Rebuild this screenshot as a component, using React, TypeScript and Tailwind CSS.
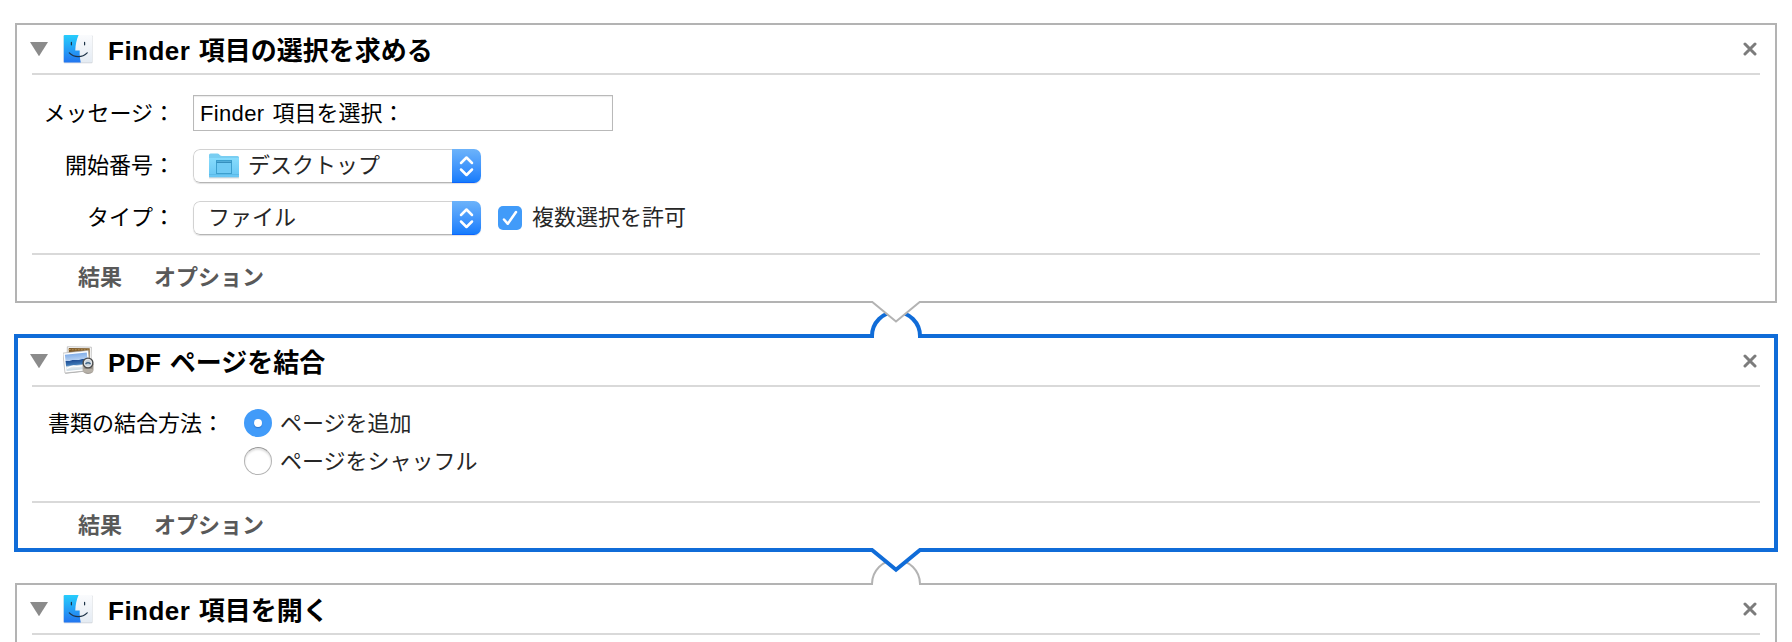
import type { ReactNode } from 'react';

const FinderIcon = () => (
  <svg width="30" height="30" viewBox="0 0 30 30" className="block">
    <defs>
      <linearGradient id="finderBlue" x1="0" y1="0" x2="0" y2="1">
        <stop offset="0" stopColor="#27cdfc" />
        <stop offset="1" stopColor="#2275f0" />
      </linearGradient>
      <linearGradient id="finderWhite" x1="0" y1="0" x2="0" y2="1">
        <stop offset="0" stopColor="#fafbfd" />
        <stop offset="1" stopColor="#e4ebf3" />
      </linearGradient>
    </defs>
    <rect x="0.5" y="1.300" width="29" height="28" rx="1" fill="#b9bec4" opacity="0.7" />
    <rect x="0.8" y="1" width="28.4" height="27.600" rx="1" fill="url(#finderWhite)" />
    <path d="M1.6 1H15.6C13.6 5.500 12.500 10.500 12.300 16.500H16.700C16.500 20.500 16.900 24.500 17.800 28.600H1.600Q0.800 28.600 0.800 27.800V1.800Q0.800 1 1.600 1Z" fill="url(#finderBlue)" />
    <path d="M8.400 8.400V10.800M21.600 8.400V10.800" stroke="#1d3347" strokeWidth="1.200" strokeLinecap="round" />
    <path d="M6.300 18.800C11.300 23.800 19.300 23.800 24.200 18.800" fill="none" stroke="#1d3347" strokeWidth="1.200" strokeLinecap="round" />
  </svg>
);

const PreviewIcon = () => (
  <svg width="32" height="30" viewBox="0 0 32 30" className="block">
    <defs>
      <linearGradient id="sky" x1="0" y1="0" x2="0" y2="1">
        <stop offset="0" stopColor="#82aee8" />
        <stop offset="0.38" stopColor="#b4d0f2" />
        <stop offset="0.4" stopColor="#1f4f96" />
        <stop offset="0.66" stopColor="#3d77b5" />
        <stop offset="0.76" stopColor="#e9eff1" />
        <stop offset="1" stopColor="#c9d8e2" />
      </linearGradient>
      <linearGradient id="loupe" x1="0" y1="0" x2="1" y2="0">
        <stop offset="0" stopColor="#bdb8b0" />
        <stop offset="0.4" stopColor="#77716a" />
        <stop offset="1" stopColor="#a29c94" />
      </linearGradient>
    </defs>
    <g transform="rotate(1 18 10)">
      <rect x="4.200" y="1" width="24" height="19" fill="#fff" stroke="#b5b5b5" strokeWidth="0.800" />
      <rect x="5.600" y="2.200" width="21" height="16" fill="#7d5a28" />
      <path d="M5.600 3.800H26.600" stroke="#b8935a" strokeDasharray="2 1" />
    </g>
    <g transform="rotate(-6 13 17)">
      <rect x="1.300" y="6.300" width="25.500" height="20.200" fill="#777" opacity="0.6" />
      <rect x="1" y="5.800" width="25.500" height="20" fill="#fff" stroke="#aaa" strokeWidth="0.600" />
      <rect x="2.800" y="7.600" width="22" height="16.400" fill="url(#sky)" />
      <path d="M3.500 21.500Q9 18.500 12 20T22 19.500" fill="none" stroke="#fff" strokeWidth="1.200" />
    </g>
    <path d="M19.500 18V23.800Q20 27.600 25 27.800T30.500 24V18Z" fill="url(#loupe)" />
    <ellipse cx="25" cy="24.800" rx="5.200" ry="2.200" fill="#b6b0a7" />
    <circle cx="25" cy="17" r="4.900" fill="#c9d3db" stroke="#4c4c4c" strokeWidth="1.400" />
    <circle cx="25" cy="17" r="3.600" fill="none" stroke="#eee" strokeWidth="0.800" />
    <path d="M22.500 18Q25 15.500 27.600 18" stroke="#426789" strokeWidth="1.300" fill="none" />
  </svg>
);

const FolderIcon = () => (
  <svg width="32" height="28" viewBox="0 0 32 28" className="block">
    <defs>
      <linearGradient id="folder" x1="0" y1="0" x2="0" y2="1">
        <stop offset="0" stopColor="#87dcfd" />
        <stop offset="1" stopColor="#66c5f3" />
      </linearGradient>
    </defs>
    <path d="M1 25.800H31" stroke="#9aa7ae" strokeWidth="1" opacity="0.6" />
    <path d="M1 3Q1 1.500 2.500 1.500H9.500Q10.500 1.500 11.300 2.500L12 3.300Q12.800 4 14 4H29.500Q31 4 31 5.500V25H1Z" fill="#79cef2" />
    <path d="M1 6H31V24.500Q31 25.300 30.200 25.300H1.800Q1 25.300 1 24.500Z" fill="url(#folder)" />
    <path d="M1 22.500H31" stroke="#58b5e2" strokeWidth="0.700" />
    <rect x="8.500" y="8.500" width="15" height="13" fill="#70cbf5" stroke="#3c9fce" strokeWidth="1" />
    <path d="M8.500 10.300H23.500" stroke="#358fbe" strokeWidth="1.400" />
  </svg>
);

type HeaderProps = { icon: ReactNode; latin: string; title: string; height: string };

function Header({ icon, latin, title, height }: HeaderProps) {
  return (
    <div className={`flex items-center border-b-2 border-[#d9d9d9] ${height}`}>
      <svg width="18" height="14" viewBox="0 0 18 14" className="-ml-0.5 shrink-0">
        <path d="M0 0H18L9 14.300Z" fill="#8b8b8b" />
      </svg>
      <div className="ml-[15px] w-8 shrink-0">{icon}</div>
      <h2 className="mt-1 ml-[13px] text-[26px] leading-8 font-bold whitespace-pre text-black">
        <span className="tracking-[0.5px]">{latin}</span>
        <span className="ml-px">{` ${title}`}</span>
      </h2>
      <svg width="14" height="14" viewBox="0 0 14 14" className="mr-[3px] ml-auto shrink-0">
        <path d="M2 2L12 12M12 2L2 12" stroke="#7c7c7c" strokeWidth="3" strokeLinecap="round" />
      </svg>
    </div>
  );
}

function Footer({ height }: { height: string }) {
  return (
    <div className={`flex items-center gap-8 border-t-2 border-[#d9d9d9] pl-[46px] font-bold text-[#595959] ${height}`}>
      <span>結果</span>
      <span>オプション</span>
    </div>
  );
}

function Popup({ children }: { children: ReactNode }) {
  return (
    <div className="flex h-[34px] w-[288px] overflow-hidden rounded-[7px] shadow-[0_1px_1px_rgba(0,0,0,0.12)]">
      <div className="flex flex-1 items-center rounded-l-[7px] border border-r-0 border-[#d2d2d2] border-b-[#b5b5b5] pl-[14px] text-[#262626]">
        {children}
      </div>
      <div className="flex w-[29px] items-center justify-center border-b border-[#0d64fb] bg-linear-to-b from-[#6cb3fa] to-[#157cfc]">
        <svg width="15" height="22" viewBox="0 0 15 22" fill="none" stroke="#fff" strokeWidth="2.500" strokeLinecap="round" strokeLinejoin="round">
          <path d="M2 8L7.500 2.500L13 8M2 14.500L7.500 20L13 14.500" />
        </svg>
      </div>
    </div>
  );
}

function Radio({ checked, label }: { checked?: boolean; label: string }) {
  return (
    <div className="flex h-7 items-center gap-2 text-[#262626]">
      {checked ? (
        <span className="flex size-7 items-center justify-center rounded-full bg-[#419bf9]">
          <span className="size-2 rounded-full bg-white shadow-[0_1px_1px_rgba(0,60,140,0.4)]" />
        </span>
      ) : (
        <span className="size-7 rounded-full border border-[#b4b4b4] border-t-[#999] bg-white shadow-[inset_0_2px_2px_rgba(0,0,0,0.12)]" />
      )}
      <span className="mt-0.5">{label}</span>
    </div>
  );
}

function Connector({ from }: { from: 'plain' | 'selected' }) {
  return (
    <div className="relative z-10 h-[31px]">
      {from === 'plain' ? (
        <svg width="60" height="40" viewBox="866 300 60 40" className="absolute -top-[3px] left-[866px]">
          <path d="M874 333H918V339H874Z" fill="#fff" />
          <path d="M872 338V336A24 24 0 0 1 920 336V338" fill="#fff" stroke="#106cd8" strokeWidth="4" />
          <path d="M872.300 300V302L896 321.500L919.700 302V300Z" fill="#fff" />
          <path d="M871 302H872.300L896 321.500L919.700 302H921" fill="none" stroke="#b3b3b3" strokeWidth="2" />
        </svg>
      ) : (
        <svg width="60" height="42" viewBox="866 545 60 42" className="absolute -top-[7px] left-[866px]">
          <path d="M873 582H919V586H873Z" fill="#fff" />
          <path d="M872 585V584A24 24 0 0 1 920 584V585" fill="#fff" stroke="#b3b3b3" strokeWidth="2" />
          <path d="M872 546V550L896 569.700L920 550V546Z" fill="#fff" />
          <path d="M870 550H872L896 569.700L920 550H922" fill="none" stroke="#106cd8" strokeWidth="4" />
        </svg>
      )}
    </div>
  );
}

export default function App() {
  return (
    <main
      lang="ja"
      className="h-[642px] w-[1792px] overflow-hidden bg-white pt-[23px] font-['Liberation_Sans','Noto_Sans_CJK_JP',sans-serif] text-[22px] leading-7 whitespace-nowrap text-black"
    >
      <section className="mx-[15px] h-[280px] border-2 border-[#b3b3b3] px-[15px]">
        <Header icon={<FinderIcon />} latin="Finder" title="項目の選択を求める" height="h-[50px]" />
        <div className="flex h-[178px] flex-col gap-[18px] pt-5">
          <div className="flex h-9 items-center">
            <label className="mt-0.5 w-[143px] text-right">メッセージ：</label>
            <div className="ml-[18px] flex h-9 w-[420px] items-center border border-[#b9b9b9] pt-0.5 pl-1.5 whitespace-pre shadow-[inset_0_1px_1px_rgba(0,0,0,0.08)]">
              <span className="tracking-[0.35px]">Finder</span>
              <span className="ml-0.5"> 項目を選択：</span>
            </div>
          </div>
          <div className="flex h-[34px] items-center">
            <label className="w-[143px] text-right">開始番号：</label>
            <div className="ml-[18px]">
              <Popup>
                <FolderIcon />
                <span className="ml-2">デスクトップ</span>
              </Popup>
            </div>
          </div>
          <div className="flex h-[34px] items-center">
            <label className="w-[143px] text-right">タイプ：</label>
            <div className="ml-[18px]">
              <Popup>ファイル</Popup>
            </div>
            <span className="ml-[17px] flex size-6 items-center justify-center rounded-[5px] bg-[#419bf9]">
              <svg width="16" height="16" viewBox="0 0 16 16" fill="none" stroke="#fff" strokeWidth="2.500" strokeLinecap="round" strokeLinejoin="round">
                <path d="M2 9.500L5.800 13.800L14 2" />
              </svg>
            </span>
            <span className="ml-[10px] text-[#262626]">複数選択を許可</span>
          </div>
        </div>
        <Footer height="h-12" />
      </section>

      <Connector from="plain" />

      <section className="mx-[14px] h-[218px] border-4 border-[#106cd8] px-[14px]">
        <Header icon={<PreviewIcon />} latin="PDF" title="ページを結合" height="h-[49px] pb-px" />
        <div className="flex h-[114px] pt-[22px]">
          <label className="mt-px w-48 text-right">書類の結合方法：</label>
          <div className="ml-5 flex flex-col gap-[10px]">
            <Radio checked label="ページを追加" />
            <Radio label="ページをシャッフル" />
          </div>
        </div>
        <Footer height="h-[47px]" />
      </section>

      <Connector from="selected" />

      <section className="mx-[15px] h-[280px] border-2 border-[#b3b3b3] px-[15px]">
        <Header icon={<FinderIcon />} latin="Finder" title="項目を開く" height="h-[50px]" />
      </section>
    </main>
  );
}
